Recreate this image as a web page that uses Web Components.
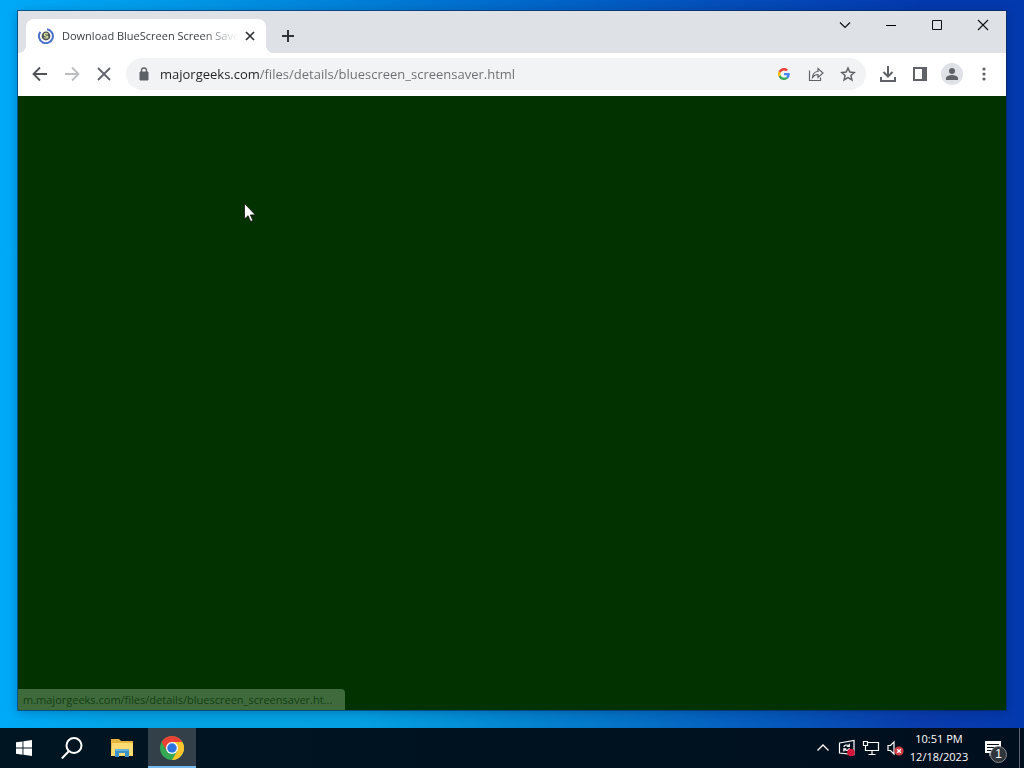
<!DOCTYPE html>
<html lang="en">
<head>
<meta charset="utf-8">
<title>Desktop</title>
<style>
html, body { margin: 0; height: 100%; }
body { font-family: "Open Sans", "Noto Sans", sans-serif; font-size: 12px; overflow: hidden; }
</style>
</head>
<body>
<desk-top>
  <browser-window>
    <tab-strip slot="strip"><browser-tab>Download BlueScreen Screen Saver</browser-tab></tab-strip>
    <tool-bar slot="toolbar"><address-bar url="majorgeeks.com/files/details/bluescreen_screensaver.html"></address-bar></tool-bar>
    <status-bubble>m.majorgeeks.com/files/details/bluescreen_screensaver.ht...</status-bubble>
  </browser-window>
  <task-bar slot="taskbar"><system-tray></system-tray></task-bar>
  <mouse-pointer slot="pointer"></mouse-pointer>
</desk-top>
<script>
function define(name, html) {
  const t = document.createElement('template');
  t.innerHTML = html;
  customElements.define(name, class extends HTMLElement {
    constructor() {
      super();
      this.attachShadow({ mode: 'open' }).append(t.content.cloneNode(true));
    }
    connectedCallback() {
      const field = this.shadowRoot.querySelector('input');
      if (field && this.hasAttribute('url')) field.value = this.getAttribute('url');
    }
  });
}
const btn = `button { border: 0; padding: 0; margin: 0; background: none; display: flex; align-items: center; justify-content: center; flex: none; color: inherit; } svg { display: block; }`;

define('desk-top', `<style>
  :host { display: grid; grid-template-rows: minmax(0, 1fr) 40px; height: 100vh; position: relative;
    background: linear-gradient(90deg, #00aaf8 0, #0095e4 20%, #0070cf 45%, #044cb8 72%, #0339ae 90%, #0339ae 100%); }
  main { padding: 11px 18px 18px; display: grid; min-height: 0;
    background: linear-gradient(90deg, #00aaf8 0, #04a2e4 12%, #04a0e2 35%, #0482ce 52%, #0558bb 76%, #0a3cad 90%, #0339ae 100%) 0 100% / 100% 18px no-repeat; }
  </style><main><slot></slot></main><slot name="taskbar"></slot><slot name="pointer"></slot>`);

define('browser-window', `<style>
  :host { display: grid; grid-template-rows: 42px 43px minmax(0, 1fr); min-width: 0; min-height: 0; background: #fff;
    box-shadow: 0 0 0 1px rgba(10,40,80,.6), 0 2px 10px rgba(0,20,60,.3); }
  section { background: #023200; display: flex; align-items: flex-end; min-width: 0; }
  </style><slot name="strip"></slot><slot name="toolbar"></slot><section><slot></slot></section>`);

define('tab-strip', `<style>${btn}
  :host { display: flex; background: #dee1e6; padding-left: 8px; color: #111; }
  .new { width: 44px; height: 34px; align-self: flex-end; }
  .controls { display: flex; margin-left: auto; }
  .controls button { width: 46px; height: 28px; }
  </style><slot></slot>
  <button class="new" aria-label="New tab"><svg width="14" height="14" viewBox="0 0 14 14" stroke="#303235" stroke-width="2"><path d="M7 1v12M1 7h12"/></svg></button>
  <div class="controls">
  <button aria-label="Search tabs"><svg width="12" height="12" fill="none" stroke="#111" stroke-width="1.200"><path d="M1 3.500l5 5 5-5"/></svg></button>
  <button aria-label="Minimize"><svg width="10" height="10"><path d="M0 5h10v1H0z"/></svg></button>
  <button aria-label="Maximize"><svg width="10" height="10" fill="none" stroke="#111"><path d="M.5.5h9v9h-9z"/></svg></button>
  <button aria-label="Close"><svg width="12" height="12" fill="none" stroke="#111" stroke-width="1.100"><path d="M1 1l10 10M11 1L1 11"/></svg></button>
  </div>`);

define('browser-tab', `<style>${btn}
  :host { display: flex; box-sizing: border-box; width: 240px; height: 34px; align-self: flex-end; align-items: center; padding: 0 8px 0 12px; background: #fff; border-radius: 8px 8px 0 0; position: relative; color: #3c4043; }
  :host::before, :host::after { content: ""; position: absolute; bottom: 0; width: 8px; height: 8px; }
  :host::before { left: -8px; background: radial-gradient(circle at 0 0, transparent 8px, #fff 8px); }
  :host::after { right: -8px; background: radial-gradient(circle at 100% 0, transparent 8px, #fff 8px); }
  .title { flex: 1; min-width: 0; margin-left: 8px; overflow: hidden; white-space: nowrap; font-size: 11px; line-height: 18px; -webkit-mask-image: linear-gradient(90deg, #000 140px, transparent 176px); mask-image: linear-gradient(90deg, #000 140px, transparent 176px); }
  button { width: 16px; height: 16px; margin-left: 4px; }
  </style>
  <svg width="16" height="16" viewBox="0 0 16 16" fill="none"><path d="M9 1.200A7 7 0 1 1 2.400 3.800" stroke="#4b70c9" stroke-width="2"/><circle cx="8" cy="8" r="4.400" fill="#4d555b"/><path d="M9.900 6.100C7.800 4.800 5.700 6 6.600 7.300s3.400.5 3.200 1.800c-.2 1.200-2.200 1.400-3.600.4" stroke="#d7dc9d" stroke-width="1.400"/></svg>
  <span class="title"><slot></slot></span>
  <button aria-label="Close tab"><svg width="10" height="10" stroke="#303235" stroke-width="1.700"><path d="M1 1l8 8M9 1L1 9"/></svg></button>`);

define('tool-bar', `<style>${btn}
  :host { display: flex; align-items: center; padding: 0 6px 1px; background: #fff; color: #5f6368; }
  button { width: 32px; height: 32px; }
  ::slotted(address-bar) { flex: 1; min-width: 0; margin: 0 6px; }
  </style>
  <button aria-label="Back"><svg width="16" height="16" fill="none" stroke="#4f5256" stroke-width="1.800"><path d="M15 8H2M8 1.500L1.500 8 8 14.500"/></svg></button>
  <button aria-label="Forward" disabled><svg width="16" height="16" fill="none" stroke="#bbbdbf" stroke-width="1.800"><path d="M1 8h13M8 1.500L14.500 8 8 14.500"/></svg></button>
  <button aria-label="Stop"><svg width="14" height="14" stroke="#5f6368" stroke-width="1.800"><path d="M1 1l12 12M13 1L1 13"/></svg></button>
  <slot></slot>
  <button aria-label="Downloads"><svg width="18" height="18" fill="none" stroke="#5f6368" stroke-width="2"><path d="M9 1v10M4.500 7L9 11.500 13.500 7M2 12v4h14v-4"/></svg></button>
  <button aria-label="Side panel"><svg width="14" height="14" fill="none"><path d="M1 1h12v12H1z" stroke="#5f6368" stroke-width="2"/><path d="M9 1h4v12H9z" fill="#5f6368"/></svg></button>
  <button aria-label="Profile"><svg width="22" height="22"><circle cx="11" cy="11" r="11" fill="#dee1e6"/><circle cx="11" cy="8" r="3" fill="#5f6368"/><path d="M5 17v-2c0-2 4-3 6-3s6 1 6 3v2z" fill="#5f6368"/></svg></button>
  <button aria-label="Menu"><svg width="16" height="16" fill="#5f6368"><circle cx="8" cy="3" r="1.600"/><circle cx="8" cy="8" r="1.600"/><circle cx="8" cy="13" r="1.600"/></svg></button>`);

define('address-bar', `<style>${btn}
  :host { display: flex; align-items: center; height: 32px; border-radius: 16px; background: #f1f3f4; padding: 0 2px; box-sizing: border-box; }
  button { width: 32px; height: 32px; }
  label { display: flex; width: 32px; justify-content: center; flex: none; }
  input { flex: 1; min-width: 0; height: 24px; border: 0; padding: 0; outline: 0; font: inherit; font-size: 13px; color: #5f6368; -webkit-text-fill-color: transparent;
    background: linear-gradient(90deg, #202124 100px, #696d71 100px); -webkit-background-clip: text; background-clip: text; }
  </style>
  <label for="url" aria-label="Address"><svg width="10" height="14"><path d="M1 5h8v8H1z" fill="#5f6368" stroke="#5f6368" stroke-linejoin="round"/><path d="M2.500 5.500V3.500a2.500 2.500 0 0 1 5 0v2" fill="none" stroke="#5f6368" stroke-width="1.300"/></svg></label>
  <input id="url" type="text" spellcheck="false">
  <button aria-label="Search with Google"><svg width="12" height="12" viewBox="0 0 48 48"><path fill="#EA4335" d="M24 9.500c3.500 0 6.700 1.200 9.200 3.600l6.900-6.900C35.900 2.400 30.500 0 24 0 14.600 0 6.500 5.400 2.600 13.200l8 6.200C12.400 13.700 17.700 9.500 24 9.500z"/><path fill="#4285F4" d="M47 24.600c0-1.600-.2-3.100-.4-4.600H24v9h12.900c-.6 3-2.300 5.500-4.800 7.200l7.700 6c4.500-4.200 7.200-10.400 7.200-17.600z"/><path fill="#FBBC05" d="M10.500 28.600a14 14 0 0 1 0-9.200l-8-6.200a24 24 0 0 0 0 21.600z"/><path fill="#34A853" d="M24 48c6.500 0 12-2.100 15.900-5.800l-7.700-6c-2.200 1.500-4.900 2.300-8.200 2.300-6.300 0-11.600-4.200-13.500-9.900l-8 6.200C6.500 42.600 14.600 48 24 48z"/></svg></button>
  <button aria-label="Share"><svg width="16" height="16" fill="none" stroke="#5f6368" stroke-width="1.200"><path d="M1.500 4.500v10h11v-3M4.500 11.500c.5-4 2.500-6 5.500-6V2.500l5 4.500-5 4.500v-3c-2.500 0-4 1-5.500 3z"/></svg></button>
  <button aria-label="Bookmark"><svg width="16" height="16" fill="none" stroke="#5f6368" stroke-width="1.500"><path d="M8 2l1.800 4.100 4.400.4-3.300 3 1 4.400L8 11.600l-3.900 2.300 1-4.400-3.300-3 4.400-.4z"/></svg></button>`);

define('status-bubble', `<style>
  :host { display: block; box-sizing: border-box; width: 327px; height: 21px; padding: 0 5px; background: #3f6b3c; border-radius: 0 4px 0 0; color: #133e13; font-size: 11px; line-height: 22px; white-space: nowrap; overflow: hidden; }
  </style><slot></slot>`);

define('task-bar', `<style>${btn}
  :host { display: flex; background: linear-gradient(90deg, #001522, #000f1e); color: #fff; }
  nav { display: flex; gap: 2px; }
  button { width: 48px; height: 40px; }
  .start { margin-right: -2px; }
  .active { background: #333f49; box-shadow: inset 0 -2px #76b9ed; }
  ::slotted(system-tray) { margin-left: auto; }
  </style><nav>
  <button class="start" aria-label="Start"><svg width="16" height="16" fill="#fff"><path d="M0 2.300L6.500 1.400v6.200H0zM7.400 1.300L16 0v7.600H7.400zM0 8.500h6.500v6.200L0 13.800zM7.400 8.500H16V16l-8.600-1.200z"/></svg></button>
  <button aria-label="Search"><svg width="22" height="22" fill="none" stroke="#fff" stroke-width="2"><circle cx="13" cy="8.500" r="7.500"/><path d="M8 14L.8 21.500"/></svg></button>
  <button aria-label="File Explorer"><svg width="22" height="20"><path d="M0 1h8l2 2h12v15H0z" fill="#e5b53e"/><path d="M1 5h21v13H0z" fill="#ffdb72"/><path d="M4 11h14v8h-4v-4H8v4H4z" fill="#3e91c9"/><path d="M4 11h14v2H4z" fill="#67b4db"/></svg></button>
  <button class="active" aria-label="Google Chrome"><svg width="24" height="24" viewBox="0 0 48 48"><circle cx="24" cy="24" r="24" fill="#34a853"/><path d="M3.200 12A24 24 0 0 1 44.800 12H24L13.600 30z" fill="#ea4335"/><path d="M44.800 12A24 24 0 0 1 24 48l10.400-18L24 12z" fill="#fbc52d"/><circle cx="24" cy="24" r="12" fill="#fff"/><circle cx="24" cy="24" r="9.500" fill="#2d73df"/></svg></button>
  </nav><slot></slot>`);

define('system-tray', `<style>${btn}
  :host { display: flex; color: #fff; }
  button { width: 24px; height: 40px; }
  .clock { width: 64px; flex-direction: column; font: inherit; font-size: 11px; line-height: 18px; white-space: nowrap; }
  .notes { width: 44px; position: relative; margin-right: 4px; }
  .badge { position: absolute; left: 19px; top: 18px; width: 17px; height: 17px; border-radius: 50%; background: #30343b; border: 1px solid #8b8e93; font-size: 12px; line-height: 15px; text-align: center; box-sizing: border-box; }
  .peek { width: 5px; border-left: 1px solid #5b6672; }
  </style>
  <button aria-label="Show hidden icons"><svg width="14" height="10" fill="none" stroke="#fff" stroke-width="1.300"><path d="M1.500 7.500L7 2l5.500 5.500"/></svg></button>
  <button aria-label="Updates"><svg width="18" height="18" fill="none" stroke="#fff" stroke-width="1.200"><path d="M1.500 4L16 1.500v14L1.500 14zM5.800 8C6.300 6 9 5.200 10.800 7M11.300 4.800v2.700H8.800M11.300 9.200c-.5 2.300-3.300 2.900-5 1.200M5.800 12.500V9.900h2.500"/><circle cx="13" cy="13.500" r="3.800" fill="#d3173a" stroke="none"/></svg></button>
  <button aria-label="Network"><svg width="18" height="16" fill="none" stroke="#fff" stroke-width="1.200"><path d="M5.500 2.500h11v8H3.500v-5M10 10.500v4M6.500 14.500h7M1.500 1.500h4v4h-4z"/></svg></button>
  <button aria-label="Volume muted"><svg width="18" height="16" fill="none"><path d="M2 5.500h2.500L8 2v12l-3.500-3.500H2z" stroke="#fff" stroke-width="1.200"/><circle cx="13" cy="11" r="4.600" fill="#d23c42"/><path d="M11.200 9.200l3.600 3.600M14.800 9.200l-3.600 3.600" stroke="#fff" stroke-width="1.300"/></svg></button>
  <button class="clock"><span>10:51 PM</span><span>12/18/2023</span></button>
  <button class="notes" aria-label="Notifications"><svg width="18" height="18"><path d="M1 2h16v12H9l-3.500 3.500V14H1z" fill="#fff"/><path d="M3 5.500h12M3 8.500h12M3 11.500h8" stroke="#06131f"/></svg><span class="badge">1</span></button>
  <button class="peek" aria-label="Show desktop"></button>`);

define('mouse-pointer', `<style>
  :host { position: absolute; left: 244px; top: 203px; pointer-events: none; } svg { display: block; }
  </style><svg width="13" height="20"><path d="M.5.500v15.500l3.600-3.300 2.500 5.800 2.300-1-2.500-5.600h5z" fill="#fff" stroke="#111" stroke-width=".8"/></svg>`);
</script>
</body>
</html>
